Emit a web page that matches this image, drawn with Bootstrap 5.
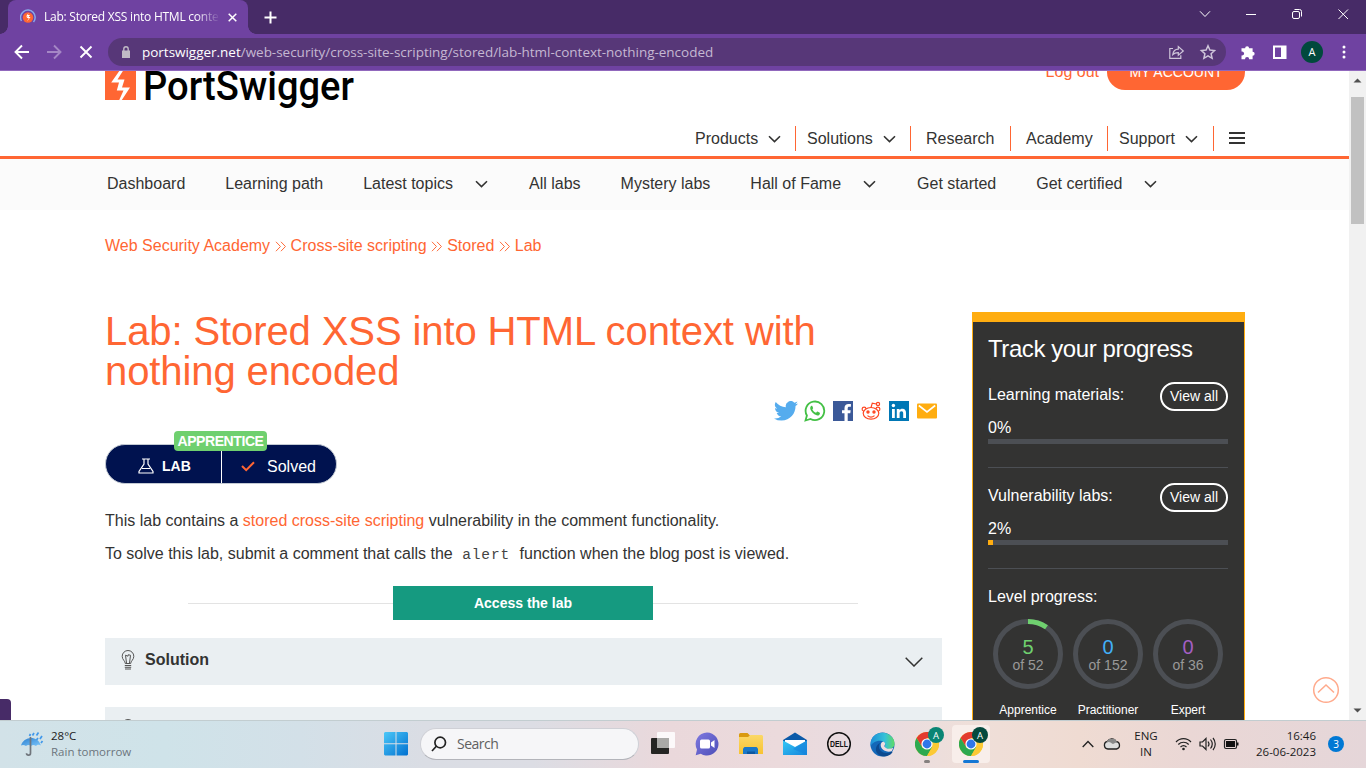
<!DOCTYPE html>
<html lang="en">
<head>
<meta charset="utf-8">
<title>Lab: Stored XSS into HTML context with nothing encoded</title>
<link href="https://cdn.jsdelivr.net/npm/bootstrap@5.3.0/dist/css/bootstrap.min.css" rel="stylesheet">
<style>
:root{--ps:#ff6633;--ink:#333332;--amber:#ffad10;--track:#4c4f54}
body{width:1366px;height:768px;font-family:"Liberation Sans",Arial,sans-serif;font-size:16px;color:var(--ink);line-height:24px}
svg{display:block;flex:none}
a{color:var(--ps);text-decoration:none}
.sys{font-family:"Open Sans","Noto Sans",sans-serif}
/* browser frame */
.tabstrip{height:34px;background:#472b67;padding-left:8px}
.tab-on{width:240px;height:34px;background:#6f42a1;border-radius:8px 8px 0 0;padding-left:12px;color:#fff;font-size:12px}
.tab-on::before,.tab-on::after{content:"";position:absolute;bottom:0;width:8px;height:8px}
.tab-on::before{left:-8px;background:radial-gradient(circle at 0 0,transparent 7.5px,#6f42a1 8px)}
.tab-on::after{right:-8px;background:radial-gradient(circle at 100% 0,transparent 7.5px,#6f42a1 8px)}
.tab-title{width:175px;margin-left:8px;overflow:hidden;letter-spacing:-.24px;-webkit-mask-image:linear-gradient(90deg,#000 152px,transparent 176px)}
.toolbar{height:37px;background:#6f42a1;border-bottom:1px solid #9168bd}
.omni{width:1118px;height:28px;border-radius:14px;background:#573778;color:#c5b8d2;font-size:13.5px;letter-spacing:-.02px;padding-left:13px;margin-left:14px}
.avatar-a{width:22px;height:22px;background:#00493c;color:#fff;font-size:11px;margin-left:13px}
/* page */
.viewport{height:649px;background:#fff}
.page{width:1350px;flex:none;margin-right:-1px}
.site-head{height:88px;border-bottom:3px solid var(--ps)}
.top-row{height:39px}
.log-out{margin-top:-11px;margin-right:8px}
.btn-account{width:138px;height:36px;margin-top:-17px;border-radius:18px;background:var(--ps);color:#fff;font-size:14px;line-height:37px}
.main-nav{height:25px;margin-top:16px;line-height:25px}
.main-nav>span{border-right:1px solid var(--ps)}
.sub-nav{height:51px;background:#fbfbfb}
.sub-nav nav{gap:40px}
.drop{gap:22px;padding-right:1px}
.crumbs{margin-top:24px;gap:4.5px}
.lesson{width:837px}
.lesson h1{font-size:40px;line-height:40px;font-weight:400;letter-spacing:-.1px;color:var(--ps);margin:0}
.share{height:22px;margin-top:9px;padding-right:4px;gap:6px}
.lab-pill{width:232px;height:40px;margin-top:22px;border:1px solid #c3cad3;border-radius:20px;background:#00124f;color:#fff}
.level{left:68px;top:-14px;width:93px;height:20px;border-radius:4px;background:#6fd06f;font-size:14px;letter-spacing:-.42px;line-height:20px;font-weight:700}
.lab-half{width:116px;border-right:1px solid #fff;padding-left:32px;font-size:14px}
.lesson p{margin:0 0 9px}
.lesson code{font-family:"Liberation Mono",monospace;font-size:14.5px;letter-spacing:.9px;color:#444;padding:0 5px}
.access{width:670px;margin:19px 0 18px 83px}
.rule{height:1px;background:#e3e3e3}
.btn-lab{width:260px;height:34px;background:#159a80;color:#fff;font-size:14px;font-weight:700}
.fold{height:47px;background:#eaeff2;padding:0 19px 4px 16px;margin-bottom:22px;font-weight:700}
.track{width:273px;height:470px;margin-top:1px;background:var(--ink);border:1px solid var(--amber);border-top:10px solid var(--amber);color:#fff;padding:13px 16px 0 15px}
.track h2{font-size:24px;line-height:28px;font-weight:400;letter-spacing:-.42px;margin:0 0 4px}
.stat{height:101px;border-bottom:1px solid var(--track);padding-top:15px}
.stat .what{padding-top:1px}
.stat .pct{margin:4px 0 -1px}
.stat .pill{width:68px;height:29px;border:2px solid #fff;border-radius:15px;font-size:14px;line-height:25px}
.meter{height:5px;background:var(--track)}
.meter div{height:5px;background:var(--amber)}
.ring{width:80px}
.ring small{font-size:12px;line-height:14px;margin-top:14px}
.sbar{width:17px;background:#f1f1f1;position:relative}
.thumb{width:13px;height:127px;background:#c1c1c1;margin-top:8px}
.to-top{left:1312px;top:605px}
.peek{left:0;top:628px;width:11px;height:21px;background:#472b67;border-radius:0 4px 0 0}
/* taskbar */
.taskbar{height:48px;padding-bottom:1px;border-top:1px solid #c2cdd0;font-size:11.5px;line-height:16px;color:#1b1b1b;background:linear-gradient(90deg,#d2e2e8 0,#cfe3e9 12%,#d3e0e8 22%,#dadde4 31%,#dcdde4 39%,#ead8db 49%,#ebdadc 57%,#e8dce1 64%,#efdfd9 71%,#efdbd2 79%,#ead7d5 87%,#e5d6d9 100%)}
.find{width:219px;height:32px;border-radius:16px;background:#f6f6f8;border:1px solid #cfd0d6;border-bottom-color:#b3b4ba;font-size:14px;color:#606060;padding-left:10px}
.app-on{width:38px;height:38px;border-radius:4px;background:#f8eeea}
.note{width:16px;height:16px;background:#0078d4;color:#fff;font-size:10px}
</style>
</head>
<body class="overflow-hidden d-flex flex-column">

<svg width="0" height="0" class="position-absolute">
  <defs>
    <linearGradient id="gw" x2="1" y2="1"><stop stop-color="#4cc8f8"/><stop offset="1" stop-color="#0070d0"/></linearGradient>
    <linearGradient id="gu" x2="1" y2="1"><stop stop-color="#2b7fd0"/><stop offset="1" stop-color="#7cc6fa"/></linearGradient>
    <linearGradient id="gt" x2="1" y2="1"><stop stop-color="#8079e0"/><stop offset="1" stop-color="#4c4fb8"/></linearGradient>
    <linearGradient id="ge" x2="1"><stop stop-color="#1b8ed8"/><stop offset=".6" stop-color="#35c1d8"/><stop offset="1" stop-color="#5fdc64"/></linearGradient>
    <linearGradient id="gm" x2="1" y2="1"><stop stop-color="#35c8f5"/><stop offset="1" stop-color="#1585dc"/></linearGradient>
    <linearGradient id="gf" y2="1" x2="0"><stop stop-color="#fbd867"/><stop offset="1" stop-color="#f8c332"/></linearGradient>
    <symbol id="dn" viewBox="0 0 13 8"><path d="M1 1.200l5.500 5.400L12 1.200" fill="none" stroke="#333332" stroke-width="1.600"/></symbol>
    <symbol id="raq" viewBox="0 0 12 11"><path d="M1 .6l4.700 4.900L1 10.400M6.200.6l4.700 4.900-4.700 4.900" fill="none" stroke="#ff6633" stroke-width="1"/></symbol>
    <symbol id="bulb" viewBox="0 0 14 20"><g fill="none" stroke="#555" stroke-width="1"><path d="M4.300 13.500C4.300 11 1.200 9.800 1.200 6.300a5.800 5.800 0 0 1 11.600 0c0 3.500-3.100 4.700-3.100 7.200z"/><path d="M5.500 13L4.500 5.200l2.500 1 .3-1.500 2.200.6L8.500 13M3.800 15.500h6.400M3.800 17.300h6.400M4 19h6"/></g></symbol>
    <symbol id="chrome" viewBox="0 0 24 24"><circle cx="12" cy="12" r="12" fill="#fcc934"/><path d="M1.600 6A12 12 0 0 1 22.400 6H12L7 15z" fill="#e33b2e"/><path d="M1.600 6A12 12 0 0 0 12 24l5.200-9-9.500 1z" fill="#2da94f"/><path d="M22.400 6H12v5l5.200 4L12 24A12 12 0 0 0 22.400 6z" fill="#fcc934"/><circle cx="12" cy="12" r="5.600" fill="#fff"/><circle cx="12" cy="12" r="4.400" fill="#2f77ea"/></symbol>
  </defs>
</svg>

<header class="tabstrip sys d-flex align-items-center">
  <div class="tab-on position-relative d-flex align-items-center">
    <svg width="16" height="16" viewBox="0 0 16 16"><circle cx="8" cy="8.500" r="5.200" fill="#ff6633"/><path d="M8.500 4L6 7.500h1.800L6.600 9h2.200L7 12.500l3.500-4.600H8.600L10 6H8z" fill="#fff"/><path d="M1.500 12A7.300 7.300 0 1 1 13.500 13" fill="none" stroke="#86a9ea" stroke-width="1.500"/></svg>
    <span class="tab-title text-nowrap">Lab: Stored XSS into HTML conte</span>
    <svg width="9" height="9" viewBox="0 0 9 9" style="margin-left:9px" stroke="#fff" stroke-width="1.500"><path d="M.7.7l7.600 7.600M8.300.7L.7 8.300"/></svg>
  </div>
  <svg width="13" height="13" viewBox="0 0 13 13" style="margin-left:16px" stroke="#fff" stroke-width="2"><path d="M6.500.5v12M.5 6.500h12"/></svg>
  <div class="ms-auto d-flex align-items-center" style="margin-right:17px;margin-top:-6px">
    <svg width="150" height="12" viewBox="0 0 150 12" fill="none" stroke="#fff"><path d="M1 3.300l5 5.200 5-5.200M47 6.500h10"/><rect x="93.500" y="3.500" width="7" height="7" rx="1.500"/><path d="M95.500 1.500h5a2 2 0 0 1 2 2v5M139.500 1.500l9.500 9.500M149 1.500L139.500 11"/></svg>
  </div>
</header>

<div class="toolbar sys d-flex align-items-center">
  <svg width="80" height="16" viewBox="0 0 80 16" style="margin-left:14px" fill="none" stroke="#fff" stroke-width="1.900"><path d="M15 8H2M8 1.500L1.500 8 8 14.500"/><path d="M33 8h13M40 1.500L46.500 8 40 14.500" stroke="#a587c5"/><path d="M66.500 2.500l11 11M77.500 2.500l-11 11"/></svg>
  <div class="omni d-flex align-items-center">
    <svg width="10" height="12" viewBox="0 0 10 12"><path d="M1 4.500h8V12H1z" fill="#c0bac5"/><path d="M2.800 5V3a2.200 2.200 0 0 1 4.400 0v2" fill="none" stroke="#c0bac5" stroke-width="1.400"/></svg>
    <span class="text-nowrap" style="margin-left:11px"><span class="text-white">portswigger.net</span>/web-security/cross-site-scripting/stored/lab-html-context-nothing-encoded</span>
    <svg width="48" height="16" viewBox="0 0 48 16" class="ms-auto" style="margin-right:10px" fill="none" stroke="#cfc5da" stroke-width="1.200"><path d="M5 4.500H1.800v9.800h11v-3"/><path d="M4.800 10.500c.5-3.600 2.600-5.200 5.500-5.300V2.500L15.300 7l-5 4.300V8.700c-2.500 0-4.200.5-5.500 1.800z"/><path d="M40 1.800l1.900 4.300 4.700.5-3.500 3.100 1 4.600-4.100-2.400-4.100 2.400 1-4.600-3.500-3.100 4.700-.5z" stroke-width="1.500"/></svg>
  </div>
  <svg width="48" height="16" viewBox="0 0 48 16" style="margin-left:14px"><path d="M1.500 4.200h3.600a2 2 0 1 1 4 0h3.500v3.500a2 2 0 1 1 0 4.100v3.400H9.200a2.100 2.100 0 1 0-4.200 0H1.500v-3.800a2 2 0 1 0 0-3.800z" fill="#fff"/><path d="M34 2.500h11.500v11.500H34z" fill="none" stroke="#fff" stroke-width="2"/><path d="M41 2h5v12h-5z" fill="#fff"/></svg>
  <div class="avatar-a rounded-circle d-flex align-items-center justify-content-center">A</div>
  <svg width="4" height="14" viewBox="0 0 4 14" style="margin-left:19px" fill="#fff"><circle cx="2" cy="2" r="1.500"/><circle cx="2" cy="7" r="1.500"/><circle cx="2" cy="12" r="1.500"/></svg>
</div>

<div class="viewport position-relative d-flex overflow-hidden">
  <div class="page">
    <div class="site-head">
      <div class="container p-0">
        <div class="top-row d-flex">
          <svg width="252" height="39" viewBox="0 0 252 39"><path d="M0-1h31v30H0z" fill="#ff6633"/><path d="M15-1L6.200 11.500H14l-2.200 8h6.700L14 29.500h2.500L25 16.500h-8l2.500-8h-7L18.500-1z" fill="#fff"/><text x="38" y="28.500" font-family="Roboto" font-weight="500" font-size="41" textLength="211" lengthAdjust="spacingAndGlyphs">PortSwigger</text></svg>
          <a href="#" class="log-out ms-auto">Log out</a>
          <div class="btn-account text-center">MY ACCOUNT</div>
        </div>
        <nav class="main-nav d-flex justify-content-end">
          <span class="d-flex align-items-center" style="width:101px">Products<svg class="ms-auto" style="margin-right:14px" width="13" height="8"><use href="#dn"/></svg></span>
          <span class="d-flex align-items-center" style="width:115px;padding-left:11px">Solutions<svg class="ms-auto" style="margin-right:14px" width="13" height="8"><use href="#dn"/></svg></span>
          <span style="width:100px;padding-left:15px">Research</span>
          <span style="width:97px;padding-left:15px">Academy</span>
          <span class="d-flex align-items-center" style="width:106px;padding-left:11px">Support<svg class="ms-auto" style="margin-right:15px" width="13" height="8"><use href="#dn"/></svg></span>
          <svg width="16" height="12" viewBox="0 0 16 12" style="margin:6px 0 0 15px" fill="#333332"><path d="M0 0h16v2H0zM0 5h16v2H0zM0 10h16v2H0z"/></svg>
        </nav>
      </div>
    </div>
    <div class="sub-nav">
      <div class="container h-100 p-0">
      <nav class="h-100 d-flex align-items-center" style="padding:0 0 1px 2px">
        <span>Dashboard</span><span>Learning path</span>
        <span class="drop d-flex align-items-center">Latest topics<svg width="13" height="8"><use href="#dn"/></svg></span>
        <span>All labs</span><span>Mystery labs</span>
        <span class="drop d-flex align-items-center">Hall of Fame<svg width="13" height="8"><use href="#dn"/></svg></span>
        <span>Get started</span>
        <span class="drop d-flex align-items-center">Get certified<svg width="13" height="8"><use href="#dn"/></svg></span>
      </nav>
      </div>
    </div>
    <div class="container p-0">
      <div class="crumbs d-flex align-items-center">
        <a href="#">Web Security Academy</a><svg width="11.500" height="11"><use href="#raq"/></svg><a href="#">Cross-site scripting</a><svg width="11.500" height="11"><use href="#raq"/></svg><a href="#">Stored</a><svg width="11.500" height="11"><use href="#raq"/></svg><a href="#">Lab</a>
      </div>
      <div class="d-flex justify-content-between" style="margin-top:53px">
        <main class="lesson">
          <h1>Lab: Stored XSS into HTML context with<br>nothing encoded</h1>
          <div class="share d-flex justify-content-end align-items-center">
            <svg width="24" height="20" viewBox="0 0 24 20"><path d="M24 2.400c-.9.400-1.800.7-2.800.8 1-.6 1.800-1.600 2.200-2.700-1 .6-2 1-3.100 1.200A4.900 4.900 0 0 0 11.900 6.200C7.800 6 4.200 4 1.700.9 0 4 1 6.400 3.200 7.500 2.400 7.500 1.600 7.200 1 6.900c0 2.400 1.700 4.400 3.900 4.900-.7.200-1.500.2-2.200.1.600 2 2.400 3.400 4.600 3.400A9.900 9.900 0 0 1 0 17.400 14 14 0 0 0 7.500 19.600c9.100 0 14.300-7.700 14-14.600 1-.7 1.800-1.600 2.500-2.600z" fill="#55acee"/></svg>
            <svg width="22" height="22" viewBox="0 0 22 22"><path d="M1.500 20.500l1.400-5A9.300 9.300 0 1 1 6.500 19z" fill="#fff" stroke="#43c045" stroke-width="1.800"/><path d="M7.400 5.800c-2.600 1.800-.4 5.600 1.800 7.500 2.500 2.200 5.500 3 6.500.9.500-1.200.2-1.500-.3-1.700l-1.900-.9c-.7-.2-1 1.200-1.500 1.100-1.600-.5-2.900-1.700-3.600-3.200-.2-.5.900-.9.700-1.500L8.300 6c-.2-.4-.6-.4-.9-.2z" fill="#43c045"/></svg>
            <svg width="22" height="22" viewBox="0 0 22 22"><path d="M1 1h20v20H1z" fill="#3b5998"/><path d="M12.500 21v-7.700H10v-3h2.500V8c0-2.700 1.600-4.100 4-4.100l2.400.1v2.800h-1.600c-1.300 0-1.600.7-1.600 1.600v1.900h3l-.4 3h-2.600V21z" fill="#fff"/></svg>
            <svg width="22" height="22" viewBox="0 0 22 22" fill="none" stroke="#ff4520" stroke-width="1.200"><ellipse cx="11" cy="13.300" rx="7.800" ry="5.800"/><path d="M3.600 11a2 2 0 1 1 2.500-2.200M18.400 11a2 2 0 1 0-2.500-2.200M11 7.500l1.300-4.300 4 .8M7.500 15.600c2 1.700 5 1.700 7 0"/><circle cx="18" cy="4" r="1.600"/><circle cx="8" cy="12" r="1.100" fill="#ff4520"/><circle cx="14" cy="12" r="1.100" fill="#ff4520"/></svg>
            <svg width="22" height="22" viewBox="0 0 22 22"><path d="M1 1h20v20H1z" fill="#0077b5"/><path d="M4 9h2.800v9H4zM8.800 9h2.700v1.300c.6-1 1.500-1.500 2.900-1.500 2.600 0 3.600 1.600 3.600 4.200v5h-2.800v-4.600c0-1.500-.5-2.200-1.600-2.200-1.300 0-2 .8-2 2.300V18H8.800z" fill="#fff"/><circle cx="5.400" cy="5.500" r="1.700" fill="#fff"/></svg>
            <svg width="22" height="22" viewBox="0 0 22 22"><rect x="1" y="3.500" width="20" height="15" rx="1" fill="#ffad10"/><path d="M2.800 5.500L11 12l8.200-6.500" fill="none" stroke="#fff" stroke-width="1.600"/></svg>
          </div>
          <div class="lab-pill position-relative d-flex align-items-stretch">
            <div class="lab-half d-flex align-items-center fw-bold" style="padding-top:4px;gap:8px"><svg width="16" height="16" viewBox="0 0 16 16" fill="none" stroke="#fff" stroke-width="1.200"><path d="M4 1h8M6 1v5L1 13.500V15h14v-1.500L10 6V1M4 10.500h8"/></svg>LAB</div>
            <div class="d-flex align-items-center" style="padding:5px 0 0 19px;gap:12px"><svg width="14" height="11" viewBox="0 0 14 11"><path d="M1 5l4.200 4.200L13 1.200" fill="none" stroke="#ff6633" stroke-width="2"/></svg>Solved</div>
            <div class="level position-absolute text-center">APPRENTICE</div>
          </div>
          <p style="margin-top:25px">This lab contains a <a href="#">stored cross-site scripting</a> vulnerability in the comment functionality.</p>
          <p>To solve this lab, submit a comment that calls the <code>alert</code> function when the blog post is viewed.</p>
          <div class="access d-flex align-items-center"><div class="rule flex-fill"></div><div class="btn-lab d-flex align-items-center justify-content-center">Access the lab</div><div class="rule flex-fill"></div></div>
          <div class="fold d-flex align-items-center"><svg width="14" height="20"><use href="#bulb"/></svg><span style="margin-left:10px">Solution</span><svg class="ms-auto mt-1" width="18" height="10" viewBox="0 0 18 10"><path d="M.7.8L9 9l8.300-8.200" fill="none" stroke="#333332" stroke-width="1.500"/></svg></div>
          <div class="fold d-flex align-items-center"><svg width="14" height="20"><use href="#bulb"/></svg></div>
        </main>
        <aside class="track">
          <h2>Track your progress</h2>
          <div class="stat">
            <div class="d-flex justify-content-between"><span class="what">Learning materials:</span><span class="pill text-center">View all</span></div>
            <div class="pct" style="padding-top:1px">0%</div><div class="meter" style="margin-top:0"></div>
          </div>
          <div class="stat">
            <div class="d-flex justify-content-between"><span class="what">Vulnerability labs:</span><span class="pill text-center">View all</span></div>
            <div class="pct" style="padding-top:1px">2%</div><div class="meter"><div style="width:2%"></div></div>
          </div>
          <div style="margin:16px 0 10px">Level progress:</div>
          <div class="d-flex">
            <div class="ring d-flex flex-column align-items-center"><svg width="70" height="70" viewBox="0 0 70 70"><circle cx="35" cy="35" r="32.500" fill="none" stroke="#4c4f54" stroke-width="5"/><path d="M35 2.500A32.500 32.500 0 0 1 53.500 8.300" fill="none" stroke="#6fd06f" stroke-width="5"/><g text-anchor="middle"><text x="35" y="35" font-size="20" fill="#6fd06f">5</text><text x="35" y="51" font-size="14" fill="#999">of 52</text></g></svg><small>Apprentice</small></div>
            <div class="ring d-flex flex-column align-items-center"><svg width="70" height="70" viewBox="0 0 70 70"><circle cx="35" cy="35" r="32.500" fill="none" stroke="#4c4f54" stroke-width="5"/><g text-anchor="middle"><text x="35" y="35" font-size="20" fill="#42b0f8">0</text><text x="35" y="51" font-size="14" fill="#999">of 152</text></g></svg><small>Practitioner</small></div>
            <div class="ring d-flex flex-column align-items-center"><svg width="70" height="70" viewBox="0 0 70 70"><circle cx="35" cy="35" r="32.500" fill="none" stroke="#4c4f54" stroke-width="5"/><g text-anchor="middle"><text x="35" y="35" font-size="20" fill="#a45fc4">0</text><text x="35" y="51" font-size="14" fill="#999">of 36</text></g></svg><small>Expert</small></div>
          </div>
        </aside>
      </div>
    </div>
  </div>
  <div class="sbar d-flex flex-column align-items-center">
    <svg width="9" height="5" viewBox="0 0 9 5" style="margin-top:7px;margin-bottom:6px"><path d="M.5 4.500h8l-4-4z" fill="#505050"/></svg>
    <div class="thumb"></div>
    <svg width="9" height="5" viewBox="0 0 9 5" class="mt-auto" style="margin-bottom:7px"><path d="M.5.5h8l-4 4z" fill="#505050"/></svg>
  </div>
  <svg class="to-top position-absolute" width="28" height="28" viewBox="0 0 28 28" fill="none" stroke="#ffaa8c" stroke-width="1.500"><circle cx="14" cy="14" r="12.300"/><path d="M6 16.500l8-7.500 8 7.500"/></svg>
  <div class="peek position-absolute"></div>
</div>

<footer class="taskbar sys d-flex align-items-center">
  <svg width="24" height="26" viewBox="0 0 24 26" style="margin-left:20px"><path d="M1 14.500C3 6 17 3 21 14.500c-1.500-1.200-4-1-5 .5-2-1.300-3.500-1.300-5 0-1.800-1.300-3.600-1.300-5 0-1.500-1.200-3.500-1.500-5-.5z" fill="url(#gu)"/><path d="M10.500 6v16a2 2 0 0 1-4 .2" fill="none" stroke="#70757c" stroke-width="1.700"/><path d="M10.500 3l-1 2M14 2l-1.500 2.500M18.500 1.500l-2 3M18 7l-1.500 2M22 5l-2 3M22.500 10l-1.500 2" stroke="#4098ea" stroke-width="1.700"/></svg>
  <div style="margin-left:7px;width:333px">28°C<br><span class="text-secondary">Rain tomorrow</span></div>
  <svg width="24" height="24" viewBox="0 0 24 24" fill="url(#gw)"><path d="M1 0h10.500v11.300H0V1zM12.500 0H23l1 1v10.300H12.500zM0 12.300h11.500v11.200H1l-1-1zM12.500 12.300H24v10.200l-1 1H12.500z"/></svg>
  <div class="find d-flex align-items-center" style="margin-left:12px"><svg width="16" height="16" viewBox="0 0 16 16" fill="none" stroke="#222" stroke-width="1.700"><circle cx="9.200" cy="6.500" r="5.300"/><path d="M5.300 10.300L1 15"/></svg><span style="margin-left:10px;letter-spacing:-.5px">Search</span></div>
  <svg width="26" height="26" viewBox="0 0 26 26" style="margin-left:12px"><rect x="0" y="7" width="18" height="16" rx="1" fill="#252523"/><rect x="6" y="1" width="18" height="16" rx="1" fill="#fff" opacity=".85"/><path d="M6 7h12v10H6z" fill="#aaa9a7"/></svg>
  <svg width="24" height="24" viewBox="0 0 24 24" style="margin-left:18px"><path d="M12 .5A11.500 11.500 0 1 1 5.800 21.700L.7 23.300 2 17.500A11.500 11.500 0 0 1 12 .5z" fill="url(#gt)"/><rect x="5" y="7.500" width="10" height="9" rx="1.500" fill="#fff"/><path d="M16 10.500l3.500-2.500v8L16 13.500z" fill="#fff"/></svg>
  <svg width="24" height="24" viewBox="0 0 24 24" style="margin-left:20px"><path d="M0 2.500a1.500 1.500 0 0 1 1.500-1.500h7L11 3.500 9 6H0z" fill="#d99a10"/><path d="M0 5h9l2.500-2H23l1 1v18H0z" fill="url(#gf)"/><path d="M4 22v-5.500l1.500-1.500h12l1.500 1.500V22z" fill="#1b78c8"/><path d="M8 22v-2.500h8V22z" fill="#0d58a0"/></svg>
  <svg width="24" height="24" viewBox="0 0 24 24" style="margin-left:20px"><path d="M0 8l12-7.500L24 8v3H0z" fill="#0b5aa8"/><path d="M2 8h20v6l-10 5L2 14z" fill="#fff"/><path d="M0 8.500l12 6.500 12-6.500V23H0z" fill="url(#gm)"/><path d="M24 8.500L10 17l14 6z" fill="#1583dc" opacity=".6"/></svg>
  <svg width="26" height="26" viewBox="0 0 26 26" style="margin-left:19px"><circle cx="13" cy="13" r="11.300" fill="none" stroke="#111" stroke-width="1.500"/><text x="4" y="16" font-family="Liberation Sans" font-size="8.500" font-weight="700" fill="#111" textLength="18" lengthAdjust="spacingAndGlyphs">DELL</text></svg>
  <svg width="25" height="25" viewBox="0 0 24 24" style="margin-left:18px"><circle cx="12" cy="12" r="11.500" fill="#1368b8"/><path d="M.5 12C.5 0 15-2.500 21 4.800c3.500 4.300 3.500 9.700-1 11.200-3 .8-6.500-.3-5.800-2.300 1.800-3-2.200-6.200-6.200-5.200C3.500 9.500 1 11.500.5 15z" fill="url(#ge)"/><path d="M9.800 10.500c-4 5.500 2.500 12.500 10.500 8.500 1-.5 1.500 0 1 .8-3.500 4.200-9.800 4.700-13.300 1.700C4 18 5.500 12 9.800 10.500z" fill="#0c4a90"/><path d="M13.500 9.500c2.500 2-.5 3.500.7 4.800 1.500 2 4.800 2.200 8.300.700l-1.700 3.500c-5.500 1.500-11-2-10.500-6.500.3-2 1.700-3.200 3.200-2.500z" fill="#eddde0"/></svg>
  <div style="margin-left:19px;width:30px;height:38px"><svg width="30" height="38" viewBox="0 0 30 38"><use href="#chrome" x="1" y="7" width="24" height="24"/><circle cx="22" cy="10" r="8" fill="#0a8574"/><text x="22" y="13.500" font-size="9.500" text-anchor="middle" fill="#fff">A</text><rect x="10" y="35" width="6" height="3" rx="1.500" fill="#85807f"/></svg></div>
  <div class="app-on" style="margin-left:8px"><svg width="38" height="38" viewBox="0 0 38 38"><use href="#chrome" x="7" y="7" width="24" height="24"/><circle cx="28" cy="10" r="8" fill="#044a3e"/><text x="28" y="13.500" font-size="9.500" text-anchor="middle" fill="#fff">A</text><rect x="11" y="35" width="16" height="3" rx="1.500" fill="#1477d4"/></svg></div>
  <svg width="12" height="8" viewBox="0 0 12 8" style="margin-left:92px"><path d="M.7 7L6 1.500 11.300 7" fill="none" stroke="#222" stroke-width="1.300"/></svg>
  <svg width="18" height="14" viewBox="0 0 18 14" style="margin-left:9px"><path d="M5 12a3.900 3.900 0 0 1-.5-7.700A4.800 4.800 0 0 1 13 4.500 3.800 3.800 0 0 1 13.500 12z" fill="#ddd" stroke="#222" stroke-width="1.300"/><path d="M3 5.500c4-1.500 5 .5 7 1.500l4-2L12 2H6z" fill="#888"/></svg>
  <div class="text-center" style="width:30px;margin-left:10px">ENG<br>IN</div>
  <svg width="64" height="16" viewBox="0 0 64 16" style="margin-left:14px" fill="none" stroke="#222" stroke-width="1.200"><path d="M1 6c4-4.500 11-4.500 15 0M3.300 8.500c3-3 7.500-3 10.400 0M5.500 11c1.800-1.700 4.200-1.700 6 0"/><circle cx="8.500" cy="13" r="1.300" fill="#222" stroke="none"/><path d="M25 6v4h2.500L31 13.500v-11L27.500 6zM33 5.500c1.200 1.500 1.200 3.500 0 5M35.500 3.500c2.200 2.800 2.200 6.200 0 9M38 2c3 3.500 3 8.500 0 12"/><rect x="49.500" y="3.500" width="12" height="9" rx="1.500"/><path d="M51 5h9v6h-9zM62 6.500h1.500v3H62z" fill="#111" stroke="none"/></svg>
  <div class="text-end" style="width:80px;margin-left:-3px">16:46<br>26-06-2023</div>
  <div class="note rounded-circle d-flex align-items-center justify-content-center" style="margin-left:12px">3</div>
</footer>

<script src="https://cdn.jsdelivr.net/npm/bootstrap@5.3.0/dist/js/bootstrap.bundle.min.js"></script>
</body>
</html>
